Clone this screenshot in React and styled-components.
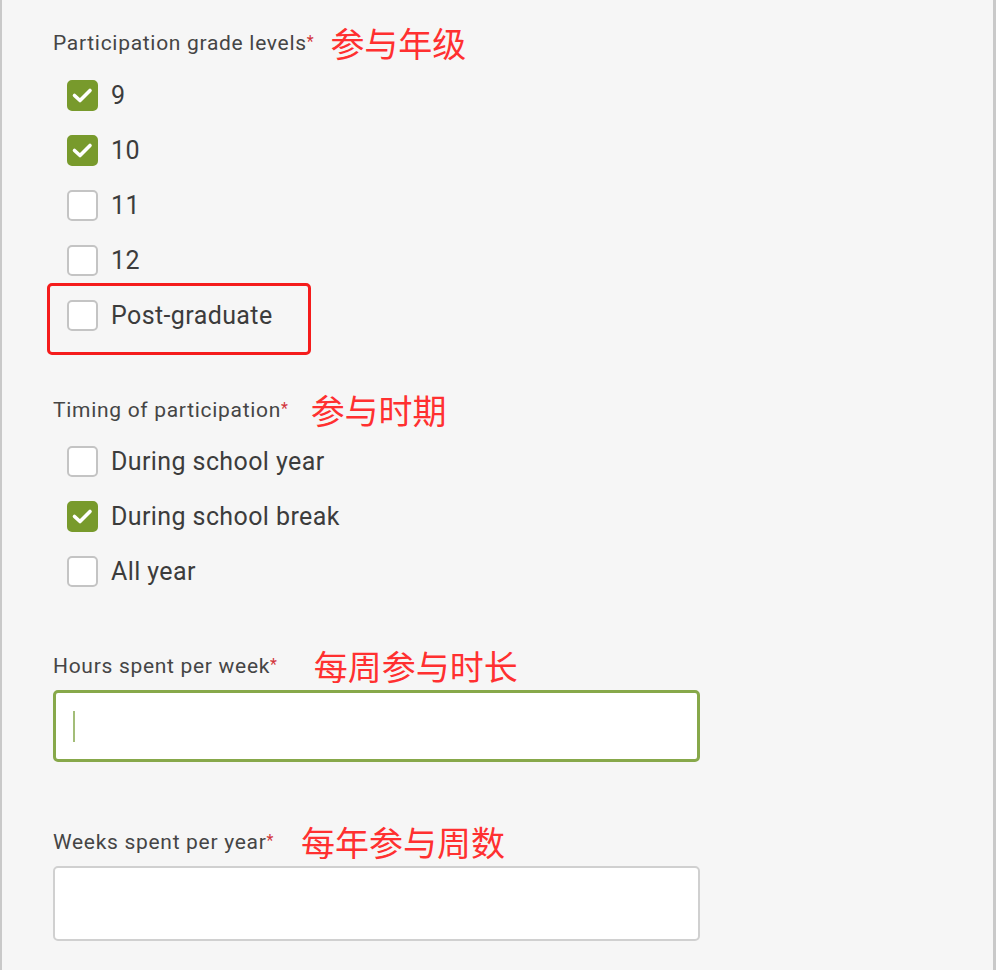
import styled, { createGlobalStyle } from "styled-components";

const GlobalStyle = createGlobalStyle`
  html, body {
    margin: 0;
    padding: 0;
    background: #f6f6f6;
  }
  * {
    box-sizing: border-box;
  }
`;

const Frame = styled.div`
  width: 996px;
  height: 970px;
  overflow: hidden;
  background: #f6f6f6;
  border-left: 2px solid #c9c9c9;
  border-right: 3px solid #c9c9c9;
  padding: 23px 0 0 51px;
  font-family: Roboto, "Noto Sans", Arial, sans-serif;
`;

const Section = styled.section`
  margin-top: ${({ $top }) => $top || 0}px;
`;

const LabelRow = styled.div`
  display: flex;
  align-items: center;
  height: 40px;
`;

const Label = styled.span`
  font-size: 21px;
  color: #454545;
  letter-spacing: 0.7px;
`;

const Star = styled.span`
  color: #d2343a;
  font-size: 16px;
  vertical-align: 3px;
`;

const Note = styled.span`
  margin-left: ${({ $gap }) => $gap}px;
  font-family: "Noto Sans CJK SC", sans-serif;
  font-size: 34px;
  font-weight: 400;
  color: #ff3030;
  line-height: 1;
`;

const Options = styled.ul`
  list-style: none;
  margin: ${({ $top }) => $top || 4}px 0 0;
  padding: 0;
`;

const Option = styled.li`
  position: relative;
  display: flex;
  align-items: center;
  gap: 13px;
  height: 55px;
  padding-left: 14px;
  font-size: 25px;
  letter-spacing: 0.4px;
  color: #3c3c3c;

  ${({ $marked }) =>
    $marked &&
    `
    &::after {
      content: "";
      position: absolute;
      left: -6px;
      top: -5px;
      width: 258px;
      height: 66px;
      border: 3px solid #f51c1c;
      border-radius: 5px;
    }
  `}
`;

const Box = styled.span`
  flex: none;
  width: 31px;
  height: 31px;
  border-radius: 5px;
  display: flex;
  align-items: center;
  justify-content: center;
  background: ${({ $checked }) => ($checked ? "#789a2c" : "#ffffff")};
  border: 2px solid ${({ $checked }) => ($checked ? "#789a2c" : "#c4c4c4")};
`;

const TextBox = styled.div`
  margin-top: 4px;
  width: 647px;
  height: ${({ $h }) => $h}px;
  background: #ffffff;
  border-radius: 5px;
  border: ${({ $focus }) => ($focus ? "3px solid #87a84a" : "2px solid #d0d0d0")};
  display: flex;
  align-items: center;
  padding-left: 17px;
`;

const Caret = styled.span`
  width: 2px;
  height: 31px;
  background: #a3bd78;
`;

const Check = () => (
  <svg width="23" height="23" viewBox="0 0 23 23">
    <polyline
      points="3.5,11.5 9,16.5 19,6.5"
      fill="none"
      stroke="#ffffff"
      strokeWidth="3.6"
      strokeLinecap="round"
      strokeLinejoin="round"
    />
  </svg>
);

const CheckItem = ({ label, checked, marked }) => (
  <Option $marked={marked}>
    <Box $checked={checked}>{checked && <Check />}</Box>
    {label}
  </Option>
);

const FieldLabel = ({ text, note, gap }) => (
  <LabelRow>
    <Label>
      {text}
      <Star>*</Star>
    </Label>
    <Note $gap={gap}>{note}</Note>
  </LabelRow>
);

const grades = [
  { label: "9", checked: true },
  { label: "10", checked: true },
  { label: "11" },
  { label: "12" },
  { label: "Post-graduate", marked: true },
];

const timing = [
  { label: "During school year" },
  { label: "During school break", checked: true },
  { label: "All year" },
];

export default function App() {
  return (
    <>
      <GlobalStyle />
      <Frame>
        <Section>
          <FieldLabel text="Participation grade levels" note="参与年级" gap={16} />
          <Options $top={5}>
            {grades.map((g) => (
              <CheckItem key={g.label} {...g} />
            ))}
          </Options>
        </Section>

        <Section $top={47}>
          <FieldLabel text="Timing of participation" note="参与时期" gap={22} />
          <Options>
            {timing.map((t) => (
              <CheckItem key={t.label} {...t} />
            ))}
          </Options>
        </Section>

        <Section $top={47}>
          <FieldLabel text="Hours spent per week" note="每周参与时长" gap={36} />
          <TextBox $focus $h={72}>
            <Caret />
          </TextBox>
        </Section>

        <Section $top={60}>
          <FieldLabel text="Weeks spent per year" note="每年参与周数" gap={27} />
          <TextBox $h={75} />
        </Section>
      </Frame>
    </>
  );
}
